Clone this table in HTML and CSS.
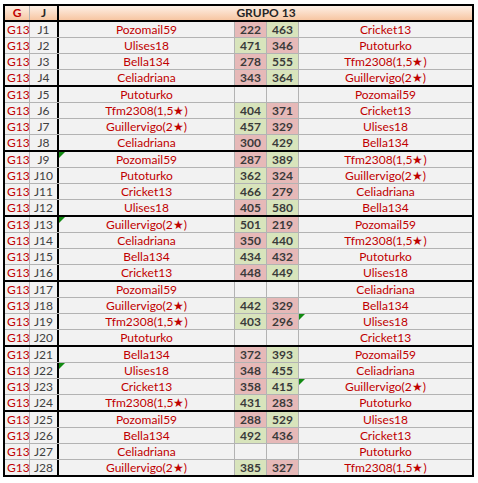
FILE: index.html
```html
<!DOCTYPE html>
<html lang="es">
<head>
<meta charset="utf-8">
<title>Grupo 13</title>
<link rel="stylesheet" href="styles.css">
</head>
<body>
<div class="sheet">
  <div class="row head">
    <div class="c g">G</div><div class="c j">J</div><div class="c title">GRUPO 13</div>
  </div>

  <div class="row"><div class="c g">G13</div><div class="c j">J1</div><div class="c n">Pozomail59</div><div class="c s lo">222</div><div class="c s hi">463</div><div class="c n r">Cricket13</div></div>
  <div class="row"><div class="c g">G13</div><div class="c j">J2</div><div class="c n">Ulises18</div><div class="c s hi">471</div><div class="c s lo">346</div><div class="c n r">Putoturko</div></div>
  <div class="row"><div class="c g">G13</div><div class="c j">J3</div><div class="c n">Bella134</div><div class="c s lo">278</div><div class="c s hi">555</div><div class="c n r">Tfm2308(1,5★)</div></div>
  <div class="row end"><div class="c g">G13</div><div class="c j">J4</div><div class="c n">Celiadriana</div><div class="c s lo">343</div><div class="c s hi">364</div><div class="c n r">Guillervigo(2★)</div></div>

  <div class="row"><div class="c g">G13</div><div class="c j">J5</div><div class="c n">Putoturko</div><div class="c s"></div><div class="c s"></div><div class="c n r">Pozomail59</div></div>
  <div class="row"><div class="c g">G13</div><div class="c j">J6</div><div class="c n">Tfm2308(1,5★)</div><div class="c s hi">404</div><div class="c s lo">371</div><div class="c n r">Cricket13</div></div>
  <div class="row"><div class="c g">G13</div><div class="c j">J7</div><div class="c n">Guillervigo(2★)</div><div class="c s hi">457</div><div class="c s lo">329</div><div class="c n r">Ulises18</div></div>
  <div class="row end"><div class="c g">G13</div><div class="c j">J8</div><div class="c n">Celiadriana</div><div class="c s lo">300</div><div class="c s hi">429</div><div class="c n r">Bella134</div></div>

  <div class="row"><div class="c g">G13</div><div class="c j">J9</div><div class="c n mark">Pozomail59</div><div class="c s lo">287</div><div class="c s hi">389</div><div class="c n r">Tfm2308(1,5★)</div></div>
  <div class="row"><div class="c g">G13</div><div class="c j">J10</div><div class="c n">Putoturko</div><div class="c s hi">362</div><div class="c s lo">324</div><div class="c n r">Guillervigo(2★)</div></div>
  <div class="row"><div class="c g">G13</div><div class="c j">J11</div><div class="c n">Cricket13</div><div class="c s hi">466</div><div class="c s lo">279</div><div class="c n r">Celiadriana</div></div>
  <div class="row end"><div class="c g">G13</div><div class="c j">J12</div><div class="c n">Ulises18</div><div class="c s lo">405</div><div class="c s hi">580</div><div class="c n r">Bella134</div></div>

  <div class="row"><div class="c g">G13</div><div class="c j">J13</div><div class="c n mark">Guillervigo(2★)</div><div class="c s hi">501</div><div class="c s lo">219</div><div class="c n r">Pozomail59</div></div>
  <div class="row"><div class="c g">G13</div><div class="c j">J14</div><div class="c n">Celiadriana</div><div class="c s lo">350</div><div class="c s hi">440</div><div class="c n r">Tfm2308(1,5★)</div></div>
  <div class="row"><div class="c g">G13</div><div class="c j">J15</div><div class="c n">Bella134</div><div class="c s hi">434</div><div class="c s lo">432</div><div class="c n r">Putoturko</div></div>
  <div class="row end"><div class="c g">G13</div><div class="c j">J16</div><div class="c n">Cricket13</div><div class="c s lo">448</div><div class="c s hi">449</div><div class="c n r">Ulises18</div></div>

  <div class="row"><div class="c g">G13</div><div class="c j">J17</div><div class="c n">Pozomail59</div><div class="c s"></div><div class="c s"></div><div class="c n r">Celiadriana</div></div>
  <div class="row"><div class="c g">G13</div><div class="c j">J18</div><div class="c n">Guillervigo(2★)</div><div class="c s hi">442</div><div class="c s lo">329</div><div class="c n r">Bella134</div></div>
  <div class="row"><div class="c g">G13</div><div class="c j">J19</div><div class="c n">Tfm2308(1,5★)</div><div class="c s hi">403</div><div class="c s lo">296</div><div class="c n r mark">Ulises18</div></div>
  <div class="row end"><div class="c g">G13</div><div class="c j">J20</div><div class="c n">Putoturko</div><div class="c s"></div><div class="c s"></div><div class="c n r">Cricket13</div></div>

  <div class="row"><div class="c g">G13</div><div class="c j">J21</div><div class="c n">Bella134</div><div class="c s lo">372</div><div class="c s hi">393</div><div class="c n r">Pozomail59</div></div>
  <div class="row"><div class="c g">G13</div><div class="c j">J22</div><div class="c n mark">Ulises18</div><div class="c s lo">348</div><div class="c s hi">455</div><div class="c n r">Celiadriana</div></div>
  <div class="row"><div class="c g">G13</div><div class="c j">J23</div><div class="c n">Cricket13</div><div class="c s lo">358</div><div class="c s hi">415</div><div class="c n r mark">Guillervigo(2★)</div></div>
  <div class="row end"><div class="c g">G13</div><div class="c j">J24</div><div class="c n">Tfm2308(1,5★)</div><div class="c s hi">431</div><div class="c s lo">283</div><div class="c n r">Putoturko</div></div>

  <div class="row"><div class="c g">G13</div><div class="c j">J25</div><div class="c n">Pozomail59</div><div class="c s lo">288</div><div class="c s hi">529</div><div class="c n r">Ulises18</div></div>
  <div class="row"><div class="c g">G13</div><div class="c j">J26</div><div class="c n">Bella134</div><div class="c s hi">492</div><div class="c s lo">436</div><div class="c n r">Cricket13</div></div>
  <div class="row"><div class="c g">G13</div><div class="c j">J27</div><div class="c n">Celiadriana</div><div class="c s"></div><div class="c s"></div><div class="c n r">Putoturko</div></div>
  <div class="row last"><div class="c g">G13</div><div class="c j">J28</div><div class="c n">Guillervigo(2★)</div><div class="c s hi">385</div><div class="c s lo">327</div><div class="c n r">Tfm2308(1,5★)</div></div>
</div>
</body>
</html>
```
FILE: styles.css
```css
html, body {
  margin: 0;
  padding: 0;
  background: #ffffff;
}

body {
  padding: 4px 0 0 3px;
  font-family: Lato, "Liberation Sans", sans-serif;
  font-size: 12px;
}

.sheet {
  box-sizing: border-box;
  width: 471px;
  border: 2px solid #000;
}

.row {
  display: grid;
  grid-template-columns: 25px 29px 176px 32px 32px 173px;
  box-sizing: border-box;
  height: 16px;
  border-bottom: 1px solid #b3b3b3;
  background: #f2f2f2;
}

.row.end {
  height: 17px;
  border-bottom: 2px solid #000;
}

.row.last {
  height: 15px;
  border-bottom: 0;
}

.c {
  box-sizing: border-box;
  height: 15px;
  line-height: 15px;
  text-align: center;
  white-space: nowrap;
  border-right: 1px solid #b3b3b3;
}

.c.r { border-right: 0; }

.c.g {
  color: #c00000;
  text-align: left;
  padding-left: 2px;
}

.c.j {
  color: #404040;
  border-right: 2px solid #000;
}

.c.n {
  color: #c00000;
  position: relative;
}

.c.s {
  color: #3a3a3a;
  font-weight: 700;
}

.c.hi { background: #d8e4bc; }
.c.lo { background: #e6b9b8; }

.c.mark::before {
  content: "";
  position: absolute;
  left: 0;
  top: 0;
  border-top: 6px solid #128a12;
  border-right: 6px solid transparent;
}

.row.head {
  height: 16px;
  border-bottom: 2px solid #000;
  background: linear-gradient(#fdf0e6, #f7c6a2);
  grid-template-columns: 25px 29px 1fr;
}

.head .c {
  height: 14px;
  line-height: 14px;
  font-weight: 700;
  color: #262626;
}

.head .c.g {
  color: #c00000;
  text-align: center;
  padding-left: 0;
}

.head .c.title {
  border-right: 0;
  padding-left: 1px;
}
```
